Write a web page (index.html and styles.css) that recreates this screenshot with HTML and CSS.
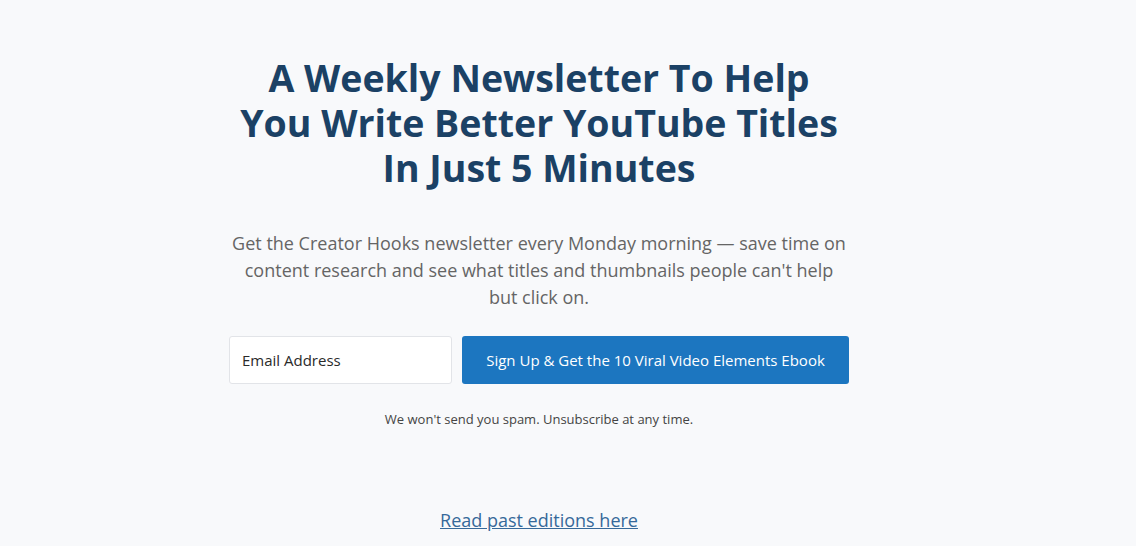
FILE: index.html
```html
<!DOCTYPE html>
<html lang="en">
<head>
<meta charset="utf-8">
<title>Creator Hooks Newsletter</title>
<link rel="stylesheet" href="styles.css">
</head>
<body>
<main class="page">
  <section class="hero">
    <h1 class="title">A Weekly Newsletter To Help<br>You Write Better YouTube Titles<br>In Just 5 Minutes</h1>
    <p class="lead">Get the Creator Hooks newsletter every Monday morning — save time on content research and see what titles and thumbnails people can't help but click on.</p>
    <form class="signup">
      <input class="email" type="email" placeholder="Email Address">
      <button class="submit" type="button">Sign Up &amp; Get the 10 Viral Video Elements Ebook</button>
    </form>
    <p class="note">We won't send you spam. Unsubscribe at any time.</p>
    <a class="past" href="#">Read past editions here</a>
  </section>
</main>
</body>
</html>
```

FILE: styles.css
```css
html, body {
  margin: 0;
  padding: 0;
  background: #f8f9fb;
}
body {
  font-family: "Open Sans", "Noto Sans", sans-serif;
  width: 1078px;
}
.page {
  display: flex;
  justify-content: center;
}
.hero {
  width: 620px;
  display: flex;
  flex-direction: column;
  align-items: center;
  text-align: center;
  padding-top: 55px;
}
.title {
  margin: 0;
  font-size: 37.5px;
  line-height: 45px;
  font-weight: 700;
  color: #1b4165;
  white-space: nowrap;
}
.lead {
  margin: 40px 0 0;
  font-size: 18px;
  line-height: 27px;
  color: #656565;
}
.signup {
  margin-top: 25px;
  display: flex;
  gap: 10px;
  width: 620px;
}
.email {
  box-sizing: border-box;
  width: 223px;
  height: 48px;
  border: 1px solid #e2e4e8;
  border-radius: 3px;
  background: #fff;
  padding: 0 12px;
  font-family: inherit;
  font-size: 15px;
  color: #222;
}
.email::placeholder {
  color: #2a2a2a;
}
.submit {
  flex: 1;
  height: 48px;
  border: none;
  border-radius: 3px;
  background: #1c76c0;
  color: #fff;
  font-family: inherit;
  font-size: 15px;
}
.note {
  margin: 26px 0 0;
  font-size: 13px;
  color: #444;
}
.past {
  margin-top: 80px;
  font-size: 18px;
  color: #36699a;
  text-decoration: underline;
}
```
